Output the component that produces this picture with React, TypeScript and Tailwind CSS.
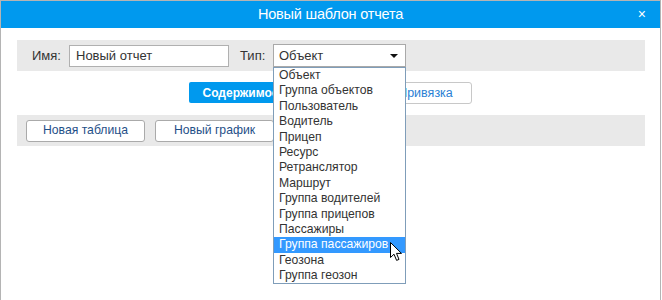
import React from "react";

const types = [
  "Объект",
  "Группа объектов",
  "Пользователь",
  "Водитель",
  "Прицеп",
  "Ресурс",
  "Ретранслятор",
  "Маршрут",
  "Группа водителей",
  "Группа прицепов",
  "Пассажиры",
  "Группа пассажиров",
  "Геозона",
  "Группа геозон",
];

function Cursor() {
  return (
    <svg width="13" height="20" viewBox="0 0 13 20" className="absolute left-[116px] top-[5px]">
      <path
        d="M0.5 0.5 L0.5 15.5 L4 12.2 L6.6 18.4 L9 17.4 L6.5 11.4 L11.5 11.4 Z"
        fill="#fff"
        stroke="#000"
        strokeWidth="1"
        strokeLinejoin="round"
      />
    </svg>
  );
}

export default function App() {
  return (
    <div className="w-[661px] h-[300px] overflow-hidden bg-white border border-b-0 border-[#b4b4b4] font-['Liberation_Sans',Arial,sans-serif] text-[13px] text-[#333]">
      <header className="relative h-[27px] bg-[#0099ee] flex items-center justify-center">
        <h1 className="text-white text-[14.5px] tracking-[-0.2px]">Новый шаблон отчета</h1>
        <button className="absolute right-[14px] top-[6px] text-white text-[14px] leading-none">×</button>
      </header>

      <div className="mt-[12px] ml-[16px] w-[628px] h-[31px] bg-[#e9e9e9] flex items-center">
        <span className="ml-[15px] w-[37px]">Имя:</span>
        <div className="w-[160px] h-[22px] border border-[#b0b0b0] bg-white flex items-center px-[6px]">Новый отчет</div>
        <span className="ml-[11px] w-[33px]">Тип:</span>
        <div className="relative w-[133px]">
          <div className="h-[23px] border border-[#a9a9a9] bg-white flex items-center justify-between pl-[5px] pr-[7px]">
            <span>Объект</span>
            <svg width="8" height="4" viewBox="0 0 8 4">
              <path d="M0 0 L8 0 L4 4 Z" fill="#111" />
            </svg>
          </div>
          <ul className="absolute z-10 left-0 top-full w-full bg-white border border-[#7f9db9] text-[12.2px]">
            {types.map((t) => (
              <li
                key={t}
                className={
                  "relative h-[15.4px] leading-[15.4px] pl-[5px] " +
                  (t === "Группа пассажиров" ? "bg-[#3399ff] text-white" : "")
                }
              >
                {t}
                {t === "Группа пассажиров" && <Cursor />}
              </li>
            ))}
          </ul>
        </div>
      </div>

      <div className="mt-[11px] flex justify-center gap-[90px]">
        <button className="w-[100px] h-[21px] rounded-[2px] bg-[#0099ee] text-white font-bold text-[12px] pl-[3px]">Содержимое</button>
        <button className="w-[93px] h-[22px] rounded-[3px] border border-[#c8c8c8] bg-white text-[#2a7fd4] text-[12.5px]">Привязка</button>
      </div>

      <div className="mt-[11px] ml-[16px] w-[628px] h-[31px] bg-[#e9e9e9] flex items-center gap-[10px] pl-[9px]">
        <button className="w-[119px] h-[22px] rounded-[3px] border border-[#aaaaaa] bg-white text-[#1f5088] text-[12.2px]">Новая таблица</button>
        <button className="w-[119px] h-[22px] rounded-[3px] border border-[#aaaaaa] bg-white text-[#1f5088] text-[12.2px]">Новый график</button>
      </div>
    </div>
  );
}
